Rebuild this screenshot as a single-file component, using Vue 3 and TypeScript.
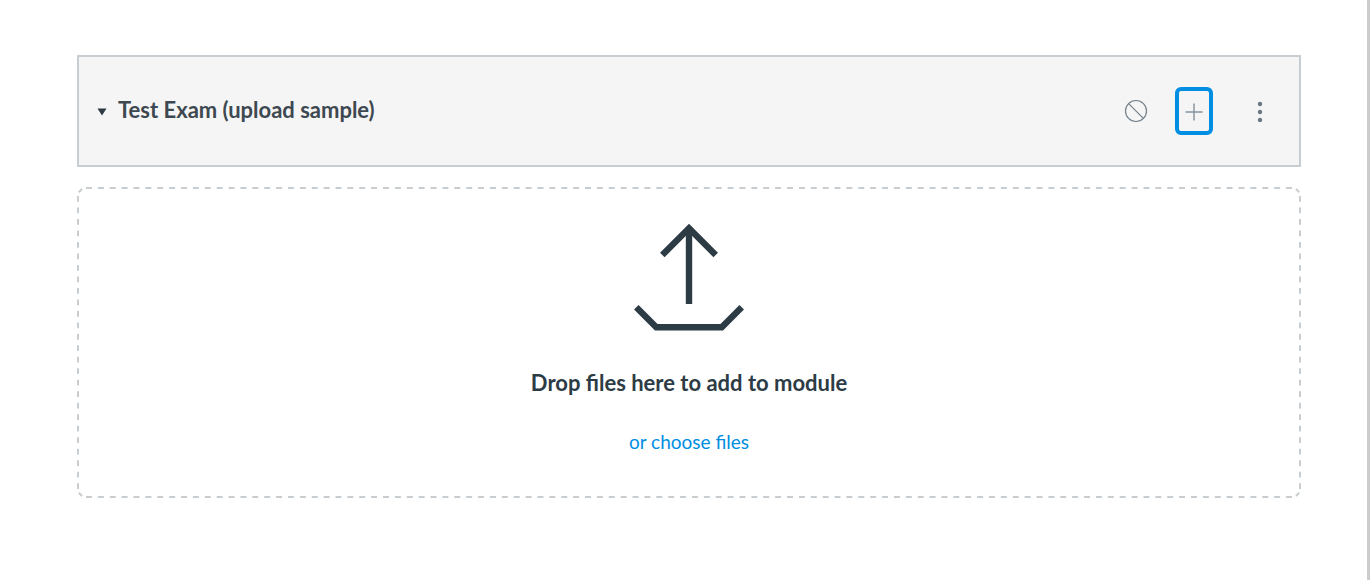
<script setup lang="ts">
import { ref } from 'vue'

const moduleName = 'Test Exam (upload sample)'
const expanded = ref(true)
const fileInput = ref<HTMLInputElement | null>(null)

function chooseFiles(): void {
  fileInput.value?.click()
}
</script>

<template>
  <main class="page">
    <section class="module-header">
      <button
        class="toggle"
        type="button"
        :aria-expanded="expanded"
        aria-label="Toggle module"
        @click="expanded = !expanded"
      >
        <svg width="10" height="10" viewBox="0 0 10 10" aria-hidden="true">
          <path d="M0.5 2.5H9.5L5 9.5Z" fill="#2d3b45" />
        </svg>
      </button>
      <h2 class="module-name">{{ moduleName }}</h2>
      <div class="actions">
        <button class="action" type="button" aria-label="Unpublished">
          <svg width="24" height="24" viewBox="0 0 24 24" aria-hidden="true">
            <g fill="none" stroke="#73818c" stroke-width="1.2">
              <circle cx="12" cy="12" r="10.5" />
              <path d="M4.6 4.6L19.4 19.4" />
            </g>
          </svg>
        </button>
        <button class="action add" type="button" aria-label="Add item">
          <svg width="18" height="20" viewBox="0 0 18 20" aria-hidden="true">
            <path d="M9 2.500V19.500M0.500 11H17.500" fill="none" stroke="#84929d" stroke-width="1.4" />
          </svg>
        </button>
        <button class="action" type="button" aria-label="Module settings">
          <svg width="6" height="22" viewBox="0 0 6 22" aria-hidden="true">
            <g fill="#6b7780">
              <circle cx="3" cy="4" r="2.200" />
              <circle cx="3" cy="12" r="2.200" />
              <circle cx="3" cy="20" r="2.200" />
            </g>
          </svg>
        </button>
      </div>
    </section>

    <section v-show="expanded" class="drop-zone">
      <svg class="outline outline-x" aria-hidden="true">
        <line x1="0" y1="1" x2="100%" y2="1" pathLength="1218" />
        <path d="M-7.200 5.200L-4 2" />
        <svg x="100%" overflow="visible">
          <path d="M7.200 5.200L4 2" />
        </svg>
        <svg y="100%" overflow="visible">
          <line x1="0" y1="-1" x2="100%" y2="-1" pathLength="1218" />
          <path d="M-7.200 -5.200L-4 -2" />
          <svg x="100%" overflow="visible">
            <path d="M7.200 -5.200L4 -2" />
          </svg>
        </svg>
      </svg>
      <svg class="outline outline-y" aria-hidden="true">
        <line x1="1" y1="0" x2="1" y2="100%" pathLength="306" />
        <svg x="100%" overflow="visible">
          <line x1="-1" y1="0" x2="-1" y2="100%" pathLength="306" />
        </svg>
      </svg>
      <svg class="upload" width="110" height="108" viewBox="0 0 110 108" aria-hidden="true">
        <g fill="none" stroke="#2d3b45" stroke-width="6.4">
          <path d="M55 81V6" />
          <path d="M28.300 32L55 5.300L81.700 32" />
          <path d="M2.300 84.300L22.300 104.200H87.700L107.700 84.300" />
        </g>
      </svg>
      <h3 class="drop-title">Drop files here to add to module</h3>
      <button class="choose" type="button" @click="chooseFiles">or choose files</button>
      <input ref="fileInput" type="file" multiple hidden aria-label="Choose files" />
    </section>
  </main>
</template>

<style>
body {
  margin: 0;
  background: #fff;
}
</style>

<style scoped>
.page {
  box-sizing: border-box;
  min-height: 100vh;
  padding: 55px 66px 55px 77px;
  border-right: 3px solid #ccc;
  font-family: Lato, "Liberation Sans", sans-serif;
  color: #2d3b45;
}

button {
  margin: 0;
  padding: 0;
  border: 0;
  background: none;
  font: inherit;
  color: inherit;
  cursor: pointer;
}

svg {
  display: block;
}

.module-header {
  display: flex;
  align-items: center;
  padding: 30px 20px 30px 18px;
  border: 2px solid #c7cdd1;
  background: #f5f5f5;
}

.toggle {
  margin-right: 11px;
}

.module-name {
  flex: 1;
  margin: 0;
  padding-bottom: 2px;
  font-size: 22px;
  font-weight: 700;
  line-height: 28px;
  color: #3d4850;
}

.actions {
  display: flex;
  align-items: center;
}

.action {
  display: flex;
  align-items: center;
  justify-content: center;
  width: 38px;
  height: 48px;
  box-sizing: border-box;
}

.add {
  margin: 0 28px 0 20px;
  border: 4px solid #008ee2;
  border-radius: 6px;
}

.drop-zone {
  position: relative;
  display: flex;
  flex-direction: column;
  align-items: center;
  margin-top: 20px;
  padding: 36px 20px 43px;
}

.outline {
  position: absolute;
  overflow: visible;
  fill: none;
  stroke: #c7cdd1;
  stroke-width: 2px;
  pointer-events: none;
}

.outline line {
  stroke-dasharray: 6 6;
}

.outline-x {
  top: 0;
  left: 9px;
  width: calc(100% - 18px);
  height: 100%;
}

.outline-y {
  top: 9px;
  left: 0;
  width: 100%;
  height: calc(100% - 18px);
}

.drop-title {
  margin: 38px 0 32px;
  font-size: 22px;
  font-weight: 700;
  line-height: 28px;
}

.choose {
  font-size: 19px;
  line-height: 26px;
  color: #008ee2;
}
</style>
